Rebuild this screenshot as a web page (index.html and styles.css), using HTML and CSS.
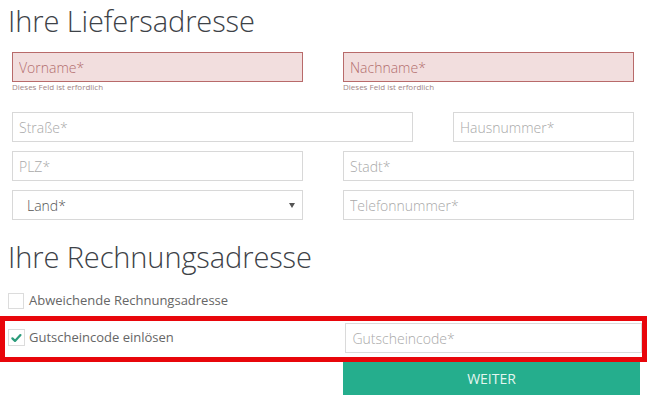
FILE: index.html
```html
<!DOCTYPE html>
<html lang="de">
<head>
<meta charset="utf-8">
<title>Lieferadresse</title>
<link rel="stylesheet" href="styles.css">
</head>
<body>
<div class="page">
  <h1 class="title">Ihre Liefersadresse</h1>
  <div class="form">
    <div class="row row-first">
      <div class="field half">
        <input class="input input-error" type="text" placeholder="Vorname*">
        <div class="error-text">Dieses Feld ist erfordlich</div>
      </div>
      <div class="field half">
        <input class="input input-error" type="text" placeholder="Nachname*">
        <div class="error-text">Dieses Feld ist erfordlich</div>
      </div>
    </div>
    <div class="row">
      <div class="field wide"><input class="input" type="text" placeholder="Straße*"></div>
      <div class="field narrow"><input class="input" type="text" placeholder="Hausnummer*"></div>
    </div>
    <div class="row">
      <div class="field half"><input class="input" type="text" placeholder="PLZ*"></div>
      <div class="field half"><input class="input" type="text" placeholder="Stadt*"></div>
    </div>
    <div class="row">
      <div class="field half">
        <div class="select"><span class="select-text">Land*</span><span class="select-arrow"></span></div>
      </div>
      <div class="field half"><input class="input" type="text" placeholder="Telefonnummer*"></div>
    </div>
  </div>
  <h1 class="title title-second">Ihre Rechnungsadresse</h1>
  <div class="check-row">
    <span class="checkbox"></span>
    <span class="check-label">Abweichende Rechnungsadresse</span>
  </div>
</div>
<div class="highlight">
  <div class="voucher-left">
    <span class="checkbox checked">
      <svg viewBox="0 0 16 16" width="16" height="16"><path d="M3.6 8.4 L6.4 11.1 L12.2 4.9" fill="none" stroke="#2b9c7b" stroke-width="2.4" stroke-linecap="round" stroke-linejoin="round"/></svg>
    </span>
    <span class="check-label">Gutscheincode einlösen</span>
  </div>
  <div class="voucher-right">
    <input class="input voucher-input" type="text" placeholder="Gutscheincode*">
  </div>
</div>
<div class="actions">
  <button class="btn" type="button">WEITER</button>
</div>
</body>
</html>
```
FILE: styles.css
```css
* { box-sizing: border-box; }
html, body { margin: 0; padding: 0; background: #fff; }
body {
  font-family: "Open Sans", "Liberation Sans", sans-serif;
  color: #444;
  width: 650px;
  height: 412px;
  overflow: hidden;
}
.page { padding-left: 8px; padding-top: 1px; }
.title {
  margin: 0;
  font-size: 29px;
  line-height: 40px;
  font-weight: 300;
  color: #3d4247;
  letter-spacing: -0.1px;
}
.title-second { margin-top: 17px; }
.form { padding-left: 4px; margin-top: 11px; }
.row { display: flex; gap: 40px; margin-bottom: 9px; }
.row-first { margin-bottom: 20px; }
.half { width: 291px; }
.wide { width: 401px; }
.narrow { width: 181px; }
.input {
  display: block;
  width: 100%;
  height: 30px;
  border: 1px solid #d8d8d8;
  background: #fff;
  padding: 0 6px;
  font-family: "Open Sans", sans-serif;
  font-size: 14px;
  font-weight: 300;
  color: #555;
  outline: none;
  margin: 0;
  border-radius: 0;
}
.input::placeholder { color: #a9a9a9; opacity: 1; }
.input-error { background: #f2dede; border-color: #b86a6a; }
.input-error::placeholder { color: #b26e6e; }
.error-text {
  font-size: 8px;
  line-height: 10px;
  color: #a08585;
  font-weight: 400;
  letter-spacing: 0;
}
.select {
  height: 30px;
  border: 1px solid #d8d8d8;
  display: flex;
  align-items: center;
  justify-content: space-between;
  padding: 0 7px 0 14px;
}
.select-text { font-size: 14px; font-weight: 300; color: #555; }
.select-arrow {
  width: 0; height: 0;
  border-left: 3px solid transparent;
  border-right: 3px solid transparent;
  border-top: 5px solid #555;
}
.check-row {
  display: flex;
  align-items: center;
  gap: 5px;
  margin-top: 15px;
  height: 17px;
}
.checkbox {
  width: 16px;
  height: 16px;
  border: 1px solid #dcdcdc;
  background: #fff;
  display: inline-flex;
  align-items: center;
  justify-content: center;
  flex: none;
}
.checkbox svg { display: block; }
.checkbox.checked { width: 17px; height: 17px; }
.check-label {
  font-size: 13px;
  line-height: 17px;
  color: #666;
  font-weight: 400;
}
.highlight {
  margin-top: 7px;
  width: 647px;
  height: 46px;
  border: 5px solid #e8060b;
  display: flex;
  align-items: flex-start;
  padding: 2px 0 0 3px;
}
.voucher-left {
  width: 338px;
  display: flex;
  align-items: center;
  gap: 4px;
  margin-top: 6px;
}
.voucher-right { width: 297px; }
.voucher-input { height: 30px; border: 1px solid #dadada; }
.actions { padding-left: 343px; }
.btn {
  display: block;
  width: 297px;
  height: 33px;
  border: none;
  margin: 0;
  background: #25ae8d;
  color: #e4f6f0;
  font-family: "Open Sans", sans-serif;
  font-size: 14px;
  font-weight: 400;
  padding: 0;
  letter-spacing: 0;
}
```
